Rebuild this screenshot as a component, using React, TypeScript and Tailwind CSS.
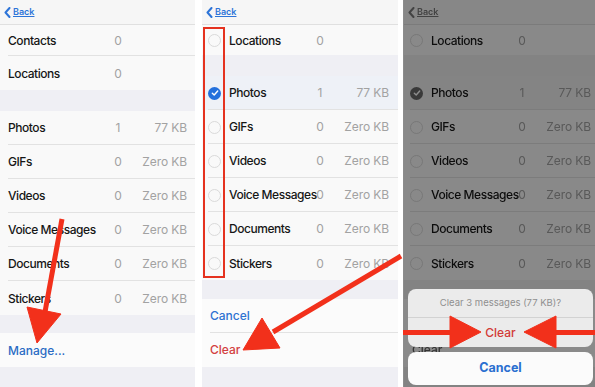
import React from "react";

type Item = { label: string; count: string; size: string; checked?: boolean };

const topItems: Item[] = [
  { label: "Photos", count: "1", size: "77 KB", checked: true },
  { label: "GIFs", count: "0", size: "Zero KB" },
  { label: "Videos", count: "0", size: "Zero KB" },
  { label: "Voice Messages", count: "0", size: "Zero KB" },
  { label: "Documents", count: "0", size: "Zero KB" },
  { label: "Stickers", count: "0", size: "Zero KB" },
];

const BackLink = ({ muted = false }: { muted?: boolean }) => (
  <div className={`flex items-center gap-[2px] ${muted ? "text-[#7a7a7a]" : "text-[#2d74d8]"}`}>
    <svg width="7" height="11" viewBox="0 0 7 11">
      <path d="M5.5 1 L1.5 5.5 L5.5 10" fill="none" stroke="currentColor" strokeWidth="2" strokeLinecap="round" strokeLinejoin="round" />
    </svg>
    <span className="text-[9px] font-semibold underline underline-offset-1">Back</span>
  </div>
);

const Radio = ({ checked }: { checked?: boolean }) =>
  checked ? (
    <div className="w-[13px] h-[13px] rounded-full bg-[#2470dc] flex items-center justify-center">
      <svg width="8" height="8" viewBox="0 0 8 8">
        <path d="M1.3 4.2 L3.2 6 L6.7 2" fill="none" stroke="white" strokeWidth="1.4" strokeLinecap="round" strokeLinejoin="round" />
      </svg>
    </div>
  ) : (
    <div className="w-[13px] h-[13px] rounded-full border border-[#dadada]" />
  );

const Cells = ({ item }: { item: { label: string; count?: string; size?: string } }) => (
  <>
    <div className="flex-1 min-w-0 whitespace-nowrap text-[12px] tracking-[-0.45px] font-medium text-[#161616]">{item.label}</div>
    <div className="w-[24px] text-center text-[12px] text-[#a2a2a2]">{item.count}</div>
    <div className="w-[57px] text-right text-[12px] tracking-[-0.1px] text-[#a2a2a2] whitespace-nowrap">{item.size}</div>
  </>
);

const PlainRow = ({ item, h = "h-[34px]", last = false }: { item: { label: string; count?: string; size?: string }; h?: string; last?: boolean }) => (
  <div className={`${h} bg-[#f9f9f9] pl-[8px]`}>
    <div className={`h-full flex items-center pt-[1px] pr-[8px] ${last ? "" : "border-b border-[#e2e2e2]"}`}>
      <Cells item={item} />
    </div>
  </div>
);

const EditRow = ({ item, h = "h-[34px]", last = false }: { item: Item; h?: string; last?: boolean }) => (
  <div className={`${h} ${item.checked ? "bg-[#eef1f7]" : "bg-[#f9f9f9]"} pl-[6px]`}>
    <div className={`h-full flex items-center pt-[1px] pr-[9px] ${last ? "" : "border-b border-[#e2e2e2]"}`}>
      <div className="w-[21px]">
        <Radio checked={item.checked} />
      </div>
      <Cells item={item} />
    </div>
  </div>
);

const Nav = ({ muted }: { muted?: boolean }) => (
  <div className="h-[25px] bg-[#f6f6f6] border-b border-[#e0e0e0] flex items-center pl-[4px]">
    <BackLink muted={muted} />
  </div>
);

const EditList = ({ muted }: { muted?: boolean }) => (
  <div className="w-[196px] h-full flex flex-col bg-[#efeff4]">
    <Nav muted={muted} />
    <EditRow item={{ label: "Locations", count: "0", size: "" }} h="h-[30px]" last />
    <div className="h-[21px]" />
    {topItems.map((it, i) => (
      <EditRow key={it.label} item={it} last={i === topItems.length - 1} />
    ))}
    <div className="h-[19px]" />
    <div className="bg-[#fbfbfb] pl-[8px]">
      <div className="h-[34px] flex items-center border-b border-[#e2e2e2] text-[12px] font-medium text-[#2e72d2]">Cancel</div>
      <div className="h-[34px] flex items-center text-[12px] font-medium text-[#d3403f]">Clear</div>
    </div>
  </div>
);

const PanelOne = () => (
  <div className="w-[195px] h-full flex flex-col bg-[#efeff4]">
    <Nav />
    <PlainRow item={{ label: "Contacts", count: "0" }} h="h-[31px]" />
    <PlainRow item={{ label: "Locations", count: "0" }} last />
    <div className="h-[21px]" />
    {topItems.map((it, i) => (
      <PlainRow key={it.label} item={it} last={i === topItems.length - 1} />
    ))}
    <div className="h-[18px]" />
    <div className="h-[34px] bg-[#fbfbfb] pl-[8px] pt-[2px] flex items-center text-[12px] font-medium text-[#2b6cc4]">Manage...</div>
  </div>
);

const PanelThree = () => (
  <div className="relative w-[192px] h-full overflow-hidden">
    <div className="h-full ml-[1px] grayscale">
      <EditList muted />
    </div>
    <div className="absolute inset-0 bg-black/45" />
    <div className="absolute left-[5px] bottom-[2px] w-[185px] flex flex-col gap-[5px]">
      <div className="rounded-[8px] bg-[#ebebeb] overflow-hidden">
        <div className="h-[29px] flex items-center justify-center border-b border-[#d2d2d2] text-[9.5px] text-[#8f8f8f]">
          Clear 3 messages (77 KB)?
        </div>
        <div className="h-[29px] flex items-center justify-center text-[12px] font-medium text-[#d23a37]">Clear</div>
      </div>
      <div className="h-[33px] rounded-[8px] bg-[#fbfbfb] flex items-center justify-center text-[12.5px] font-bold text-[#2a6fd0]">
        Cancel
      </div>
    </div>
  </div>
);

export default function App() {
  return (
    <div className="relative w-[595px] h-[387px] overflow-hidden bg-white flex font-['Inter','Liberation_Sans',sans-serif]">
      <PanelOne />
      <div className="w-[7px]" />
      <EditList />
      <div className="w-[5px]" />
      <PanelThree />

      <svg className="absolute inset-0 pointer-events-none" width="595" height="387" viewBox="0 0 595 387">
        <rect x="204" y="28" width="20" height="249" fill="none" stroke="#e5321f" strokeWidth="2" />
        <g fill="#f2301b" stroke="#f2301b">
          <line x1="62" y1="219" x2="45" y2="312" strokeWidth="5" />
          <polygon points="27,307 61,314 37,343" strokeWidth="1" strokeLinejoin="round" />
          <line x1="401" y1="256" x2="273" y2="332" strokeWidth="5" />
          <polygon points="262,318 280,348 243,350" strokeWidth="1" strokeLinejoin="round" />
          <rect x="403" y="330" width="49" height="5" stroke="none" />
          <polygon points="450,316 450,348 481,332" strokeWidth="1" strokeLinejoin="round" />
          <rect x="554" y="330" width="41" height="5" stroke="none" />
          <polygon points="556,316 556,348 524,332" strokeWidth="1" strokeLinejoin="round" />
        </g>
      </svg>
    </div>
  );
}
